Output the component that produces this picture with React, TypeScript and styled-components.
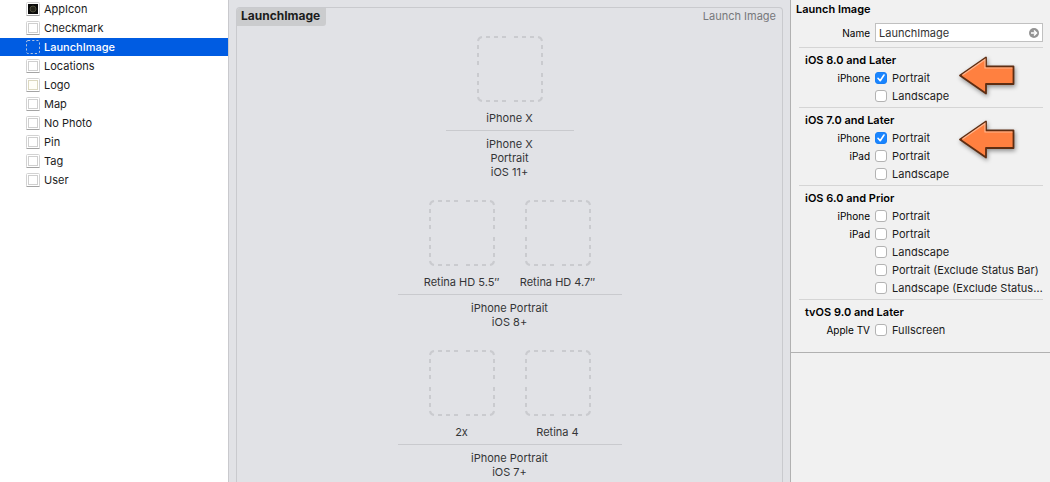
import React, { useState } from "react";
import styled, { createGlobalStyle, css } from "styled-components";

const GlobalStyle = createGlobalStyle`
  *, *::before, *::after { box-sizing: border-box; }
  body {
    margin: 0;
    font-family: Inter, "Liberation Sans", sans-serif;
    font-size: 11px;
    line-height: 18px;
    color: #1c1c1c;
  }
  button, input { font: inherit; color: inherit; }
`;

const Page = styled.div`
  display: grid;
  grid-template-columns: 229px minmax(0, 1fr) 260px;
  min-height: 100vh;
`;

/* Asset list */

const Sidebar = styled.nav`
  background: #fff;
  border-right: 1px solid #c9c9cd;
`;

const AssetList = styled.ul`
  display: flex;
  flex-direction: column;
  gap: 1px;
  list-style: none;
  margin: 0;
  padding: 0;
`;

const AssetButton = styled.button<{ $selected: boolean }>`
  display: flex;
  align-items: center;
  gap: 4px;
  width: 100%;
  height: 18px;
  padding: 0 0 0 26px;
  border: 0;
  background: ${(p) => (p.$selected ? "#005ce2" : "transparent")};
  color: ${(p) => (p.$selected ? "#fff" : "#1c1c1c")};
  font-weight: ${(p) => (p.$selected ? 500 : 400)};
  text-align: left;
`;

type Kind = "app" | "image" | "logo" | "launch";

const AssetIcon = ({ kind }: { kind: Kind }) => (
  <svg width="14" height="14" viewBox="0 0 14 14" aria-hidden="true">
    {kind === "launch" ? (
      <rect x="0.5" y="0.5" width="13" height="13" rx="1.5" fill="none" stroke="#b3c4e0" strokeDasharray="2.2 2" />
    ) : (
      <>
        <rect x="0.5" y="0.5" width="13" height="13" rx="1" fill="#fff" stroke="#d2d2d2" />
        <path d="M0.5 13.5H13.5" stroke="#a4a4a4" />
        {kind === "app" ? (
          <>
            <rect x="2" y="2" width="10" height="10" fill="#0b0b0b" />
            <circle cx="7" cy="7" r="3" fill="#25251c" stroke="#4c4b38" />
          </>
        ) : (
          <rect
            x="2.5"
            y="2.5"
            width="9"
            height="9"
            fill={kind === "logo" ? "#fffef8" : "#fff"}
            stroke={kind === "logo" ? "#dcd8bf" : "#cfcfcf"}
          />
        )}
      </>
    )}
  </svg>
);

const assets: { name: string; kind: Kind }[] = [
  { name: "AppIcon", kind: "app" },
  { name: "Checkmark", kind: "image" },
  { name: "LaunchImage", kind: "launch" },
  { name: "Locations", kind: "image" },
  { name: "Logo", kind: "logo" },
  { name: "Map", kind: "image" },
  { name: "No Photo", kind: "image" },
  { name: "Pin", kind: "image" },
  { name: "Tag", kind: "image" },
  { name: "User", kind: "image" },
];

/* Image set canvas */

const Canvas = styled.main`
  display: flex;
  background: #e1e2e6;
  padding: 7px 7px 0;
`;

const SetCard = styled.section`
  flex: 1;
  min-width: 0;
  border: 1px solid #c9cace;
  border-bottom: 0;
  border-radius: 4px 4px 0 0;
`;

const SetHeader = styled.header`
  display: flex;
  justify-content: space-between;
  height: 18px;
  line-height: 16px;
`;

const SetName = styled.h1`
  margin: 0;
  padding: 0 6px 0 4px;
  background: #cbccce;
  border-radius: 3px 0 3px 0;
  font-size: 12px;
  font-weight: 700;
  color: #1c1c1c;
`;

const SetType = styled.span`
  padding-right: 6px;
  color: #77787b;
`;

const Groups = styled.div`
  display: flex;
  flex-direction: column;
  align-items: center;
  gap: 21px;
  padding-top: 10px;
`;

const Group = styled.div`
  text-align: center;
  line-height: 14px;
  color: #343537;
`;

const Wells = styled.div`
  display: flex;
  padding: 0 16px 5px;
  border-bottom: 1px solid #c9cace;
`;

const Well = styled.div`
  display: flex;
  flex-direction: column;
  align-items: center;
  gap: 9px;
  width: 96px;
  white-space: nowrap;
`;

const Caption = styled.p`
  margin: 6px 0 0;
`;

const DropBox = () => (
  <svg width="66" height="66" viewBox="0 0 66 66" fill="none" stroke="#cacbcf" strokeWidth="2" aria-hidden="true">
    <path
      strokeDasharray="4 4"
      d="M9 1H29 M37 1H57 M9 65H29 M37 65H57 M1 9V29 M1 37V57 M65 9V29 M65 37V57"
    />
    <path d="M1 5Q1.500 1.500 5 1 M61 1Q64.500 1.500 65 5 M65 61Q64.500 64.500 61 65 M5 65Q1.500 64.500 1 61" />
  </svg>
);

const groups = [
  { wells: ["iPhone X"], lines: ["iPhone X", "Portrait", "iOS 11+"] },
  { wells: ["Retina HD 5.5″", "Retina HD 4.7″"], lines: ["iPhone Portrait", "iOS 8+"] },
  { wells: ["2x", "Retina 4"], lines: ["iPhone Portrait", "iOS 7+"] },
];

/* Inspector */

const Inspector = styled.aside`
  background: #f1f1f1;
  border-left: 1px solid #b1b1b1;
`;

const InspectorPanel = styled.div`
  padding: 0 7px 11px 8px;
  border-bottom: 1px solid #b1b1b1;
`;

const PanelTitle = styled.h2`
  margin: 0 0 5px -3px;
  font-size: 11px;
  font-weight: 600;
  line-height: 18px;
  color: #000;
`;

const rowGrid = css`
  display: grid;
  grid-template-columns: 71px minmax(0, 1fr);
  column-gap: 5px;
  align-items: center;
`;

const NameRow = styled.div`
  ${rowGrid}
  margin-bottom: 5px;
`;

const FieldLabel = styled.label`
  text-align: right;
  font-size: 10px;
  color: #000;
`;

const NameField = styled.div`
  position: relative;
  display: flex;
`;

const NameInput = styled.input`
  width: 100%;
  height: 19px;
  padding: 0 18px 0 3px;
  border: 1px solid #c0c0c0;
  border-radius: 0;
  background: #fff;
  outline: 0;
  color: #333;
`;

const RevealButton = styled.button`
  position: absolute;
  top: 4px;
  right: 3px;
  display: flex;
  padding: 0;
  border: 0;
  background: none;
`;

const Section = styled.section`
  position: relative;
  padding: 3px 0 2px;
  border-top: 1px solid #d5d5d5;
`;

const SectionTitle = styled.h3`
  margin: 0 0 0 6px;
  font-size: 11px;
  font-weight: 600;
  line-height: 18px;
  color: #000;
`;

const OptionRow = styled.div`
  ${rowGrid}
  height: 18px;
`;

const Device = styled.span`
  text-align: right;
  font-size: 10px;
  color: #000;
`;

const Option = styled.label`
  display: flex;
  align-items: center;
  gap: 5px;
  min-width: 0;
`;

const OptionText = styled.span`
  overflow: hidden;
  text-overflow: ellipsis;
  white-space: nowrap;
`;

const CheckFrame = styled.span`
  position: relative;
  display: flex;
  flex: none;
`;

const Checkbox = styled.input`
  appearance: none;
  width: 12px;
  height: 12px;
  margin: 0;
  border: 1px solid #b3b3b3;
  border-radius: 3px;
  background: #fff;
  &:checked {
    border-color: #1a80f5;
    background: #1a85ff;
  }
  &:checked + svg { display: block; }
`;

const Tick = styled.svg`
  display: none;
  position: absolute;
  inset: 0;
  pointer-events: none;
`;

const Pointer = styled.svg<{ $top: number }>`
  position: absolute;
  top: ${(p) => p.$top}px;
  right: 24px;
  filter: drop-shadow(1px 2px 2px rgba(0, 0, 0, 0.4));
  pointer-events: none;
`;

const ArrowPointer = ({ top }: { top: number }) => (
  <Pointer $top={top} width="64" height="46" viewBox="0 0 64 46" aria-hidden="true">
    <path
      d="M5 21.500L31 3.500V12.500H58.500V30H31V39.500Z"
      fill="#ff8040"
      stroke="#5e2d12"
      strokeWidth="1.800"
      strokeLinejoin="round"
    />
    <path d="M7.500 21L30 5.400V14H57.400" fill="none" stroke="#ffb48c" strokeWidth="1.200" />
  </Pointer>
);

type OptionItem = { device?: string; text: string; on?: boolean };

const sections: { title: string; pointer?: number; options: OptionItem[] }[] = [
  {
    title: "iOS 8.0 and Later",
    pointer: 6,
    options: [{ device: "iPhone", text: "Portrait", on: true }, { text: "Landscape" }],
  },
  {
    title: "iOS 7.0 and Later",
    pointer: 10,
    options: [
      { device: "iPhone", text: "Portrait", on: true },
      { device: "iPad", text: "Portrait" },
      { text: "Landscape" },
    ],
  },
  {
    title: "iOS 6.0 and Prior",
    options: [
      { device: "iPhone", text: "Portrait" },
      { device: "iPad", text: "Portrait" },
      { text: "Landscape" },
      { text: "Portrait (Exclude Status Bar)" },
      { text: "Landscape (Exclude Status Bar)" },
    ],
  },
  { title: "tvOS 9.0 and Later", options: [{ device: "Apple TV", text: "Fullscreen" }] },
];

export default function App() {
  const [selected, setSelected] = useState("LaunchImage");
  return (
    <>
      <GlobalStyle />
      <Page>
        <Sidebar aria-label="Assets">
          <AssetList>
            {assets.map((a) => (
              <li key={a.name}>
                <AssetButton type="button" $selected={a.name === selected} onClick={() => setSelected(a.name)}>
                  <AssetIcon kind={a.kind} />
                  {a.name}
                </AssetButton>
              </li>
            ))}
          </AssetList>
        </Sidebar>

        <Canvas>
          <SetCard>
            <SetHeader>
              <SetName>LaunchImage</SetName>
              <SetType>Launch Image</SetType>
            </SetHeader>
            <Groups>
              {groups.map((g, i) => (
                <Group key={i}>
                  <Wells>
                    {g.wells.map((w) => (
                      <Well key={w}>
                        <DropBox />
                        <span>{w}</span>
                      </Well>
                    ))}
                  </Wells>
                  <Caption>
                    {g.lines.map((line, n) => (
                      <React.Fragment key={line}>
                        {n > 0 && <br />}
                        {line}
                      </React.Fragment>
                    ))}
                  </Caption>
                </Group>
              ))}
            </Groups>
          </SetCard>
        </Canvas>

        <Inspector>
          <InspectorPanel>
            <PanelTitle>Launch Image</PanelTitle>
            <NameRow>
              <FieldLabel htmlFor="set-name">Name</FieldLabel>
              <NameField>
                <NameInput id="set-name" type="text" defaultValue="LaunchImage" />
                <RevealButton type="button" aria-label="Reveal">
                  <svg width="12" height="12" viewBox="0 0 12 12" fill="none" aria-hidden="true">
                    <circle cx="6" cy="6" r="5" fill="#949494" />
                    <path d="M3 6H8 M6 3.500L8.500 6L6 8.500" stroke="#fff" strokeWidth="1.500" />
                  </svg>
                </RevealButton>
              </NameField>
            </NameRow>
            {sections.map((s) => (
              <Section key={s.title}>
                <SectionTitle>{s.title}</SectionTitle>
                {s.options.map((o, i) => (
                  <OptionRow key={i}>
                    <Device>{o.device}</Device>
                    <Option>
                      <CheckFrame>
                        <Checkbox type="checkbox" defaultChecked={o.on} />
                        <Tick width="12" height="12" viewBox="0 0 12 12" fill="none">
                          <path
                            d="M3 6.300L5.200 8.700L9 3"
                            stroke="#fff"
                            strokeWidth="1.600"
                            strokeLinecap="round"
                            strokeLinejoin="round"
                          />
                        </Tick>
                      </CheckFrame>
                      <OptionText>{o.text}</OptionText>
                    </Option>
                  </OptionRow>
                ))}
                {s.pointer !== undefined && <ArrowPointer top={s.pointer} />}
              </Section>
            ))}
          </InspectorPanel>
        </Inspector>
      </Page>
    </>
  );
}
